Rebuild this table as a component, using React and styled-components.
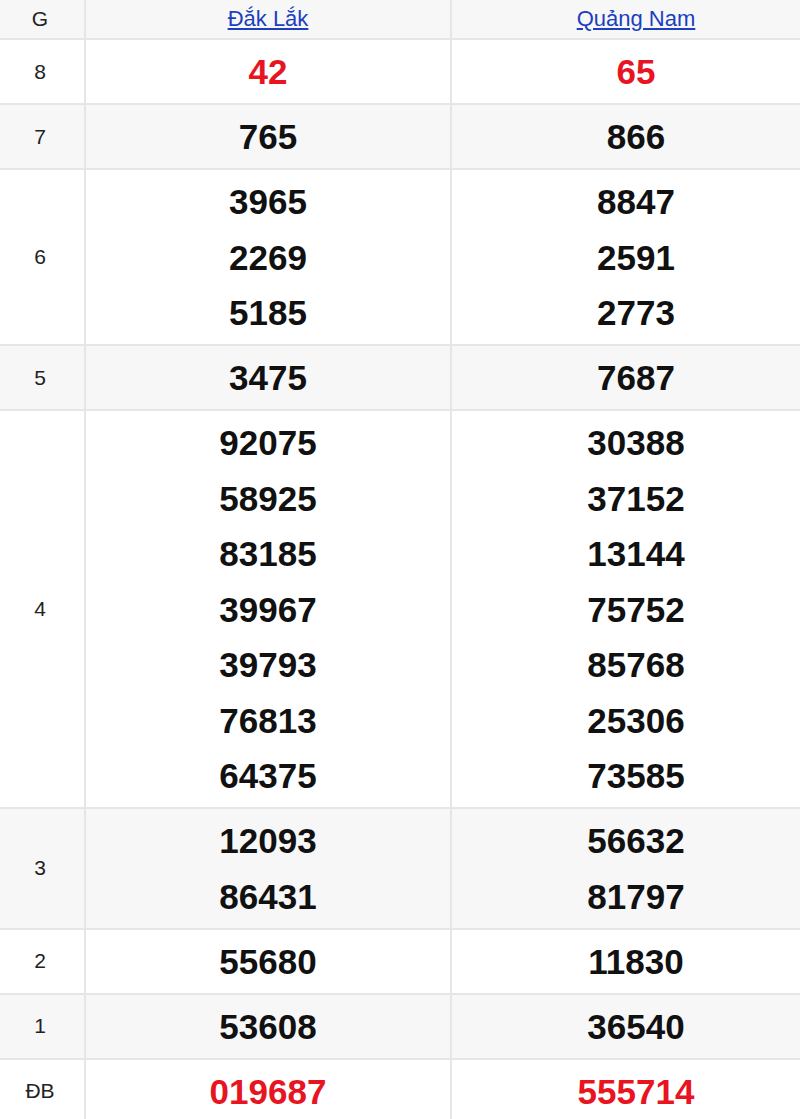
import React from 'react';
import styled, { createGlobalStyle } from 'styled-components';

const GlobalStyle = createGlobalStyle`
  html, body {
    margin: 0;
    padding: 0;
    background: #ffffff;
    overflow: hidden;
  }
  body {
    font-family: "Liberation Sans", Arial, sans-serif;
  }
`;

const rows = [
  { label: '8', a: ['42'], b: ['65'], red: true },
  { label: '7', a: ['765'], b: ['866'] },
  { label: '6', a: ['3965', '2269', '5185'], b: ['8847', '2591', '2773'] },
  { label: '5', a: ['3475'], b: ['7687'] },
  {
    label: '4',
    a: ['92075', '58925', '83185', '39967', '39793', '76813', '64375'],
    b: ['30388', '37152', '13144', '75752', '85768', '25306', '73585'],
  },
  { label: '3', a: ['12093', '86431'], b: ['56632', '81797'] },
  { label: '2', a: ['55680'], b: ['11830'] },
  { label: '1', a: ['53608'], b: ['36540'] },
  { label: 'ĐB', a: ['019687'], b: ['555714'], red: true },
];

const App = () => {
  return (
    <>
      <GlobalStyle />
      <Table>
        <HeaderRow>
          <LabelCell>G</LabelCell>
          <HeadCell>
            <ProvinceLink href="#">Đắk Lắk</ProvinceLink>
          </HeadCell>
          <HeadCell>
            <ProvinceLink href="#">Quảng Nam</ProvinceLink>
          </HeadCell>
        </HeaderRow>
        {rows.map((row, i) => (
          <Row key={row.label} $shade={i % 2 === 1}>
            <LabelCell>{row.label}</LabelCell>
            <NumberCell>
              {row.a.map((n) => (
                <Number key={n} $red={row.red}>{n}</Number>
              ))}
            </NumberCell>
            <NumberCell>
              {row.b.map((n) => (
                <Number key={n} $red={row.red}>{n}</Number>
              ))}
            </NumberCell>
          </Row>
        ))}
      </Table>
    </>
  );
};

export default App;

const Table = styled.div`
  width: 822px;
  display: flex;
  flex-direction: column;
`;

const Row = styled.div`
  display: grid;
  grid-template-columns: 86px 366px 370px;
  background: ${(p) => (p.$shade ? '#f7f7f7' : '#ffffff')};
  border-bottom: 2px solid #e6e6e6;
`;

const HeaderRow = styled(Row)`
  background: #f7f7f7;
  height: 40px;
  box-sizing: border-box;
`;

const LabelCell = styled.div`
  display: flex;
  align-items: center;
  justify-content: center;
  padding-right: 4px;
  border-right: 2px solid #e6e6e6;
  font-size: 21px;
  color: #222;
`;

const HeadCell = styled.div`
  display: flex;
  align-items: center;
  justify-content: center;
  border-right: 2px solid #e6e6e6;
  font-size: 22px;
`;

const ProvinceLink = styled.a`
  color: #1c3fbf;
  text-decoration: underline;
`;

const NumberCell = styled.div`
  display: flex;
  flex-direction: column;
  align-items: center;
  padding: 4px 0 3.5px;
  border-right: 2px solid #e6e6e6;
`;

const Number = styled.div`
  font-size: 35px;
  font-weight: bold;
  line-height: 55.5px;
  color: ${(p) => (p.$red ? '#e8141f' : '#111111')};
`;
